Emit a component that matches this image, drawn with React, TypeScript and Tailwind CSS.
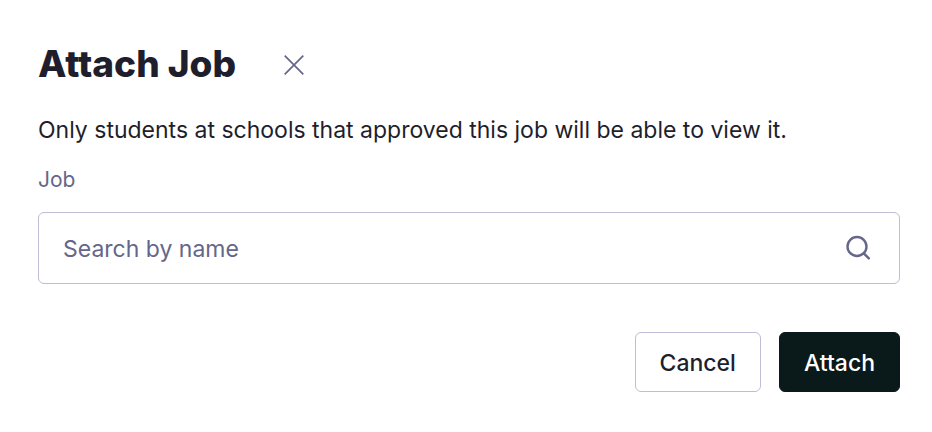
import { useState } from 'react';

export default function App() {
  const [query, setQuery] = useState('');

  return (
    <form
      className="bg-white px-8 pt-11 pb-10 pl-[38px] font-['Inter',sans-serif] text-[#1e1e2d]"
      onSubmit={(e) => e.preventDefault()}
    >
      <header className="flex items-center gap-[46px]">
        <h1 className="text-[37px] leading-10 font-extrabold">Attach Job</h1>
        <button type="button" aria-label="Close" className="text-[#66668a]">
          <svg width="24" height="24" viewBox="0 0 24 24" fill="none" stroke="currentColor" strokeWidth="1.7">
            <path d="M2.7 3.7l18.6 18.6M21.3 3.7L2.7 22.3" />
          </svg>
        </button>
      </header>

      <p className="mt-7 text-[23px] leading-9">
        Only students at schools that approved this job will be able to view it.
      </p>

      <label htmlFor="job" className="mt-4 block text-[21px] leading-8 text-[#66668a]">
        Job
      </label>
      <div className="mt-4 flex h-[72px] items-center rounded-md border border-[#bdbdd6] px-6">
        <input
          id="job"
          type="text"
          placeholder="Search by name"
          value={query}
          onChange={(e) => setQuery(e.target.value)}
          className="min-w-0 flex-1 pt-0.5 text-[23px] leading-9 outline-none placeholder:text-[#66668a]"
        />
        <svg
          width="32"
          height="32"
          viewBox="0 0 32 32"
          fill="none"
          stroke="#66668a"
          strokeWidth="2.4"
          strokeLinecap="round"
        >
          <circle cx="14" cy="14.5" r="9.5" />
          <path d="M20.8 21.3l5 5" />
        </svg>
      </div>

      <div className="mt-12 flex justify-end gap-[18px]">
        <button
          type="button"
          className="h-[60px] rounded-md border border-[#bdbdd6] px-6 pt-0.5 text-[23px] leading-9 font-medium"
        >
          Cancel
        </button>
        <button
          type="submit"
          className="h-[60px] rounded-md border border-[#0a1919] bg-[#0a1919] px-6 pt-0.5 text-[23px] leading-9 font-medium text-white"
        >
          Attach
        </button>
      </div>
    </form>
  );
}
